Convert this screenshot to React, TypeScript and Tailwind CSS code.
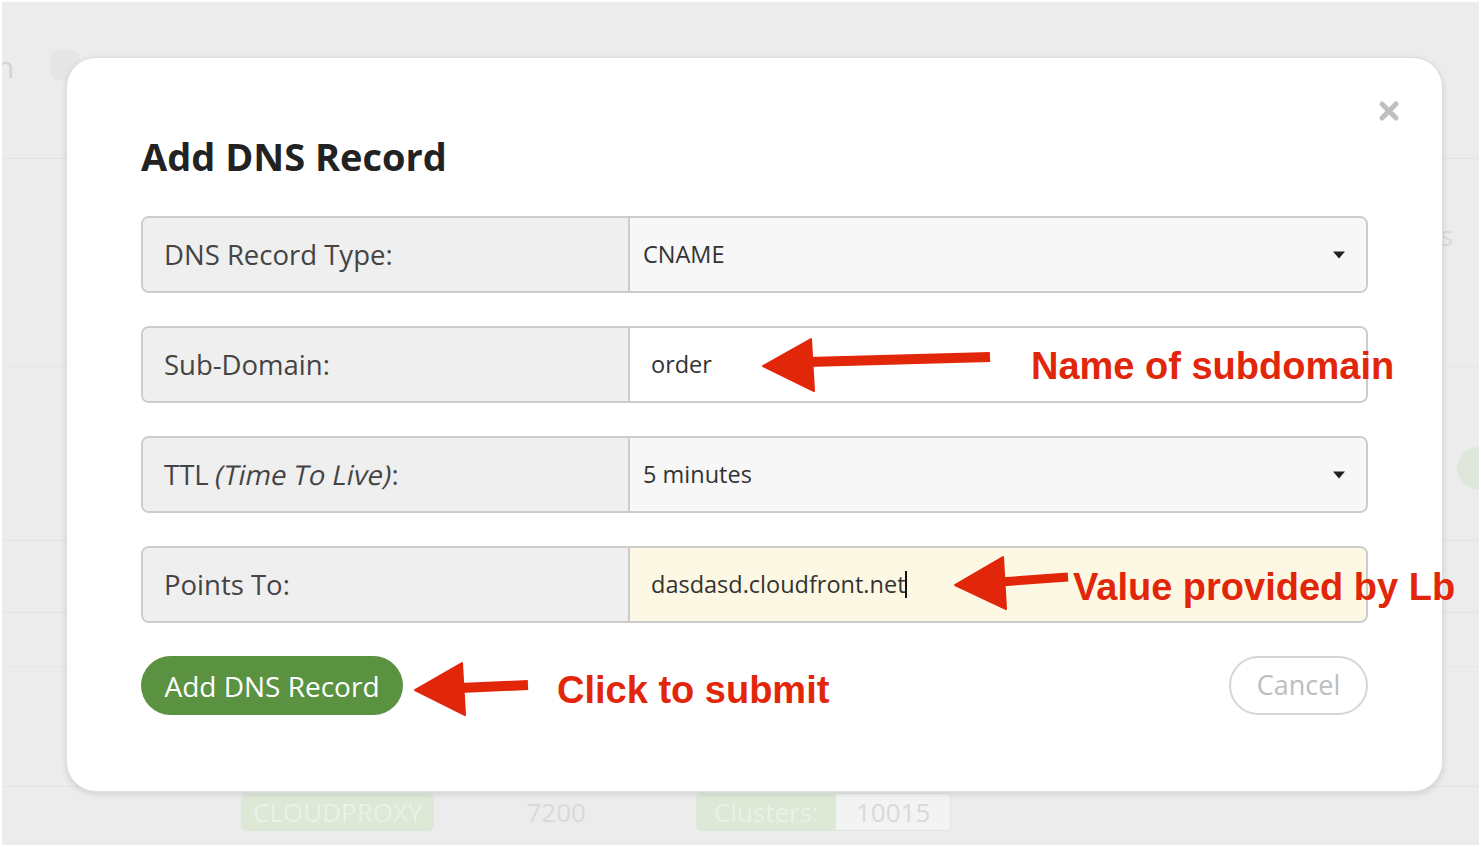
import React from 'react'

const sans = { fontFamily: '"Open Sans", "Noto Sans", sans-serif' }
const arial = { fontFamily: '"Liberation Sans", Arial, sans-serif' }

function Caret() {
    return (
        <svg width="14" height="8" viewBox="0 0 14 8" className="shrink-0">
            <path d="M1 0.5 H13 L7 7.5 Z" fill="#222" />
        </svg>
    )
}

function Row({ label, children }: { label: React.ReactNode; children: React.ReactNode }) {
    return (
        <div className="flex h-[77px] rounded-[8px] border-2 border-[#cccccc] overflow-hidden">
            <div className="w-[487px] shrink-0 bg-[#efefef] border-r-2 border-[#cccccc] flex items-center pl-[21px] text-[27.5px] text-[#444]">
                {label}
            </div>
            {children}
        </div>
    )
}

function Arrows() {
    return (
        <svg
            className="absolute left-0 top-0 pointer-events-none"
            width="1477"
            height="843"
            viewBox="2 2 1477 843"
        >
            <g fill="#e1260a" stroke="#e1260a" strokeLinejoin="round">
                <polygon points="763,366 811,339 814,391" strokeWidth="2" />
                <line x1="808" y1="362" x2="990" y2="357" strokeWidth="10" />
                <polygon points="955,585 1003,557 1006,609" strokeWidth="2" />
                <line x1="1000" y1="582" x2="1068" y2="577" strokeWidth="9" />
                <polygon points="415,690 462,663 465,715" strokeWidth="2" />
                <line x1="460" y1="688" x2="528" y2="685" strokeWidth="10" />
            </g>
        </svg>
    )
}

export default function App() {
    return (
        <div className="w-[1481px] h-[847px] bg-white p-[2px]" style={sans}>
            <div className="relative h-full bg-[#ececec] overflow-hidden">
                {/* page behind the dialog */}
                <div className="flex flex-col">
                    <div className="h-[157px] border-b border-[#e3e3e3] flex items-start pt-[50px] gap-[36px]">
                        <span className="text-[30px] leading-none text-[#d4d4d4] -ml-[6px]">n</span>
                        <span className="w-[30px] h-[30px] rounded-[8px] bg-[#e6e6e6] -mt-[2px]" />
                    </div>
                    <div className="h-[208px] border-b border-[#e6e6e6] flex justify-end items-start pt-[62px] pr-[26px]">
                        <span className="text-[28px] leading-none text-[#dadada]">s</span>
                    </div>
                    <div className="h-[174px] border-b border-[#e3e3e3] flex justify-end items-start pt-[80px]">
                        <span className="w-[42px] h-[42px] rounded-full bg-[#dfe6da] -mr-[20px]" />
                    </div>
                    <div className="h-[72px] border-b border-[#e3e3e3]" />
                    <div className="h-[54px] border-b border-[#e6e6e6]" />
                    <div className="h-[120px] border-b border-[#e3e3e3]" />
                    <div className="flex items-center h-[50px] pl-[239px] text-[26px]">
                        <span className="h-[38px] px-[12px] rounded-[5px] bg-[#dde8d7] text-[#eaf1e6] flex items-center">
                            CLOUDPROXY
                        </span>
                        <span className="ml-[92px] text-[#d9d9d9]">7200</span>
                        <div className="ml-[110px] flex h-[38px] rounded-[5px] overflow-hidden border border-[#dde8d7]">
                            <span className="px-[17px] bg-[#dde8d7] text-[#eaf1e6] flex items-center">Clusters:</span>
                            <span className="px-[20px] bg-[#f3f3f3] text-[#d9d9d9] flex items-center">10015</span>
                        </div>
                    </div>
                </div>

                {/* dialog */}
                <div className="absolute left-[64px] top-[55px] w-[1377px] h-[735px] bg-white rounded-[30px] border border-[#dedede] shadow-[0_2px_6px_rgba(0,0,0,0.12)] px-[74px] pt-[74px]">
                    <button className="absolute right-[42px] top-[42px]">
                        <svg width="22" height="22" viewBox="0 0 22 22">
                            <path d="M4 4 L18 18 M18 4 L4 18" stroke="#bfbfbf" strokeWidth="5" strokeLinecap="round" />
                        </svg>
                    </button>

                    <h1 className="text-[38px] leading-[48px] font-bold text-[#222]">Add DNS Record</h1>

                    <div className="mt-[36px] flex flex-col gap-[33px]">
                        <Row label="DNS Record Type:">
                            <div className="flex-1 bg-[#f7f7f7] flex items-center justify-between pl-[13px] pr-[20px] text-[23.5px] text-[#333]">
                                <span>CNAME</span>
                                <Caret />
                            </div>
                        </Row>
                        <Row label="Sub-Domain:">
                            <div className="flex-1 bg-white flex items-center pl-[21px] text-[23.5px] text-[#333]">
                                order
                            </div>
                        </Row>
                        <Row
                            label={
                                <span>
                                    TTL <span className="inline-block -skew-x-12">(Time To Live)</span>:
                                </span>
                            }
                        >
                            <div className="flex-1 bg-[#f7f7f7] flex items-center justify-between pl-[13px] pr-[20px] text-[23.5px] text-[#333]">
                                <span>5 minutes</span>
                                <Caret />
                            </div>
                        </Row>
                        <Row label="Points To:">
                            <div className="flex-1 bg-[#fdf8e3] flex items-center pl-[21px] text-[23.5px] text-[#333]">
                                <span>dasdasd.cloudfront.net</span>
                                <span className="w-[2px] h-[27px] bg-[#111] -ml-[1px]" />
                            </div>
                        </Row>
                    </div>

                    <div className="mt-[33px] flex items-center justify-between">
                        <button className="h-[59px] w-[262px] rounded-full bg-[#5a9241] text-white text-[28px]">
                            Add DNS Record
                        </button>
                        <button className="h-[59px] w-[139px] rounded-full border-2 border-[#d6d6d6] text-[#bdbdbd] text-[27px]">
                            Cancel
                        </button>
                    </div>
                </div>

                {/* annotations */}
                <Arrows />
                <span
                    className="absolute left-[1029px] top-[340px] text-[38px] leading-[48px] font-bold text-[#e1260a] whitespace-nowrap"
                    style={arial}
                >
                    Name of subdomain
                </span>
                <span
                    className="absolute left-[1071px] top-[561px] text-[38px] leading-[48px] font-bold text-[#e1260a] whitespace-nowrap"
                    style={arial}
                >
                    Value provided by Lb
                </span>
                <span
                    className="absolute left-[555px] top-[664px] text-[38px] leading-[48px] font-bold text-[#e1260a] whitespace-nowrap"
                    style={arial}
                >
                    Click to submit
                </span>
            </div>
        </div>
    )
}
